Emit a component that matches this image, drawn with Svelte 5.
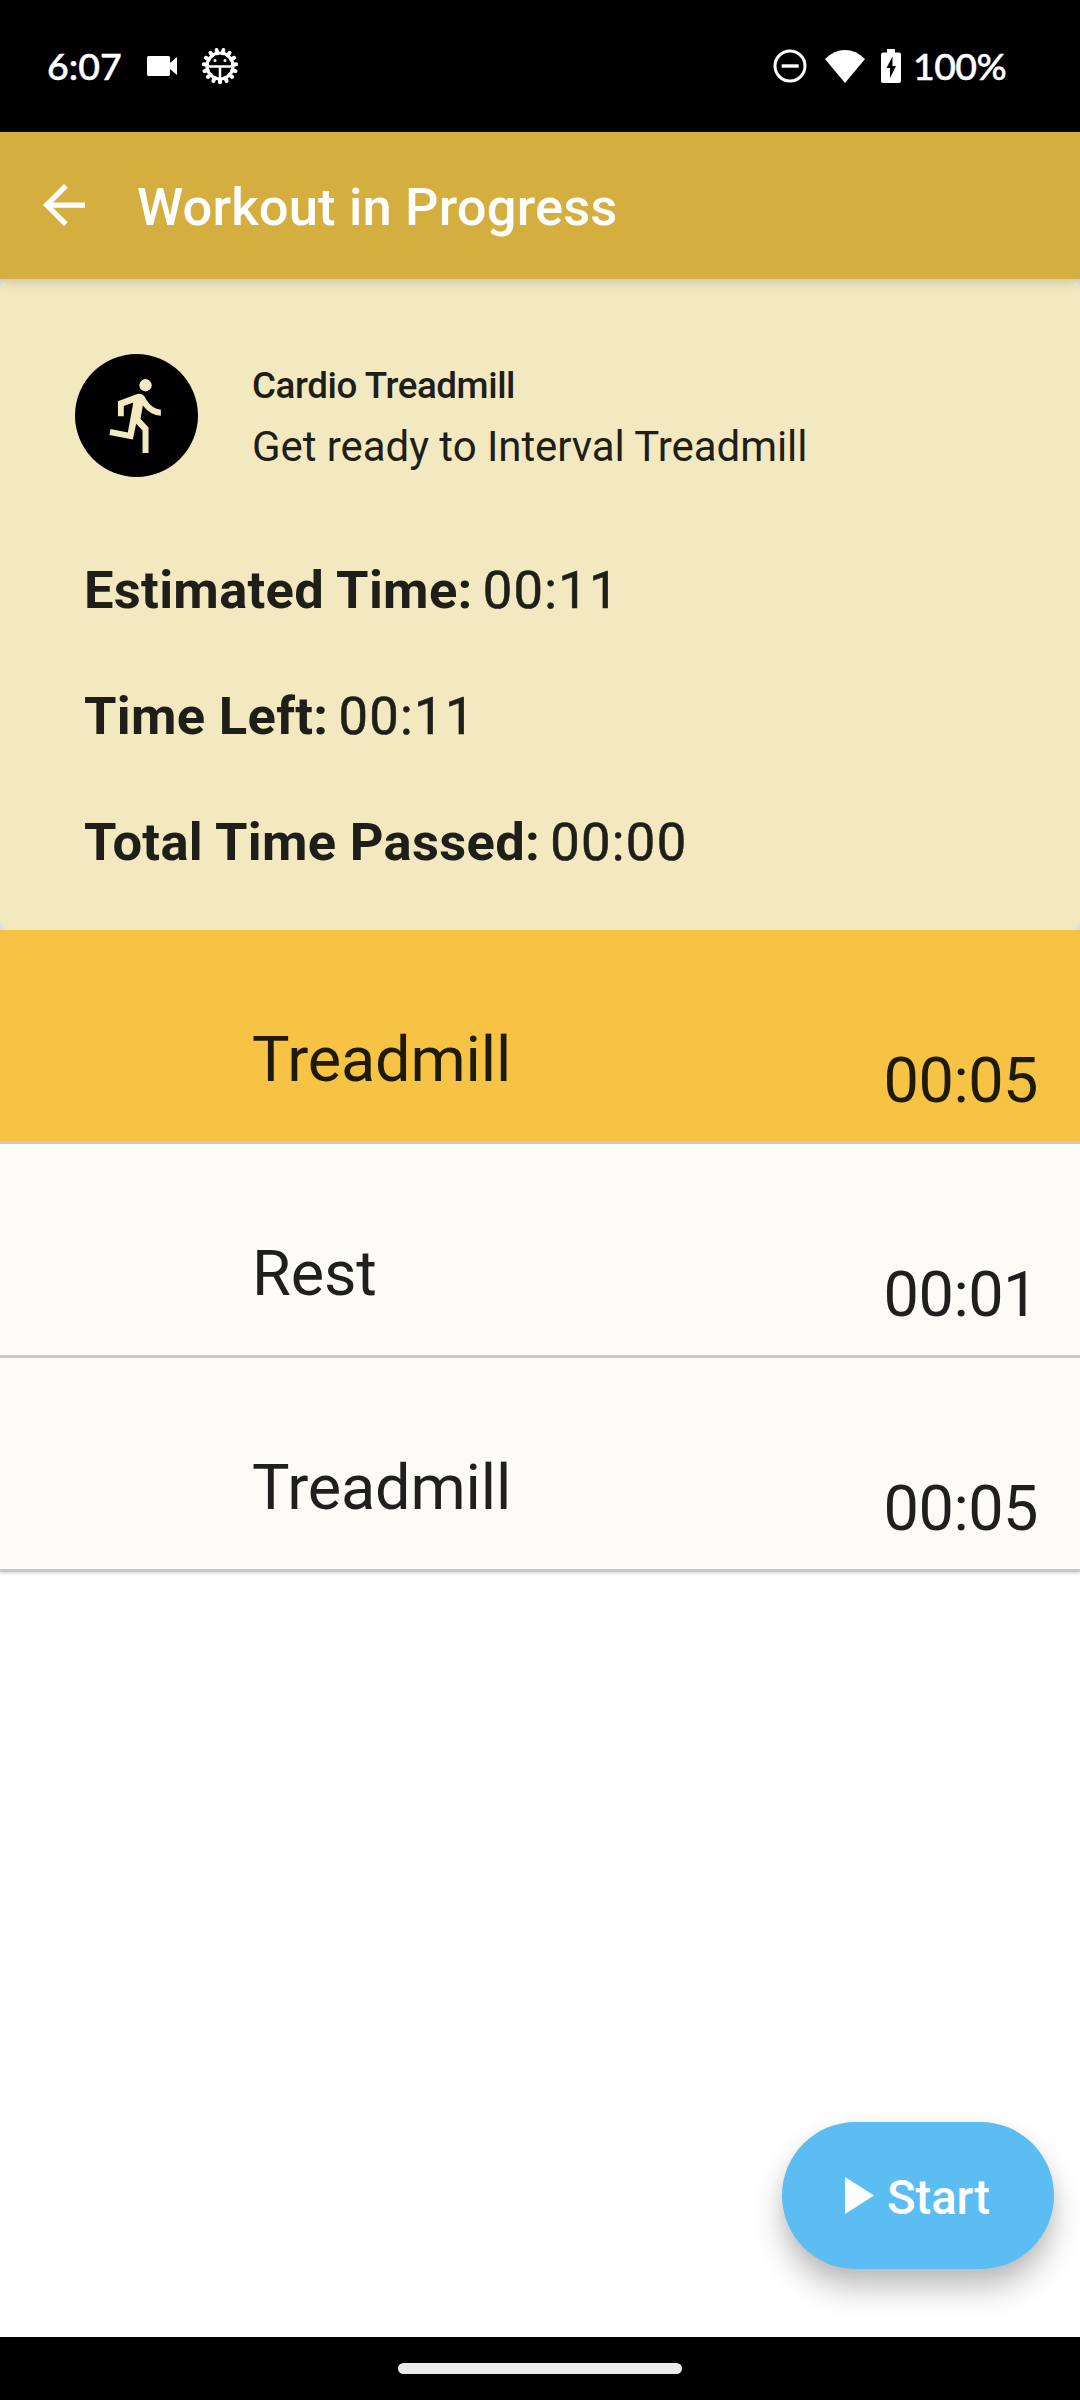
<script>
  const stats = [
    { label: 'Estimated Time:', value: '00:11' },
    { label: 'Time Left:', value: '00:11' },
    { label: 'Total Time Passed:', value: '00:00' }
  ];
  const steps = [
    { name: 'Treadmill', time: '00:05', active: true },
    { name: 'Rest', time: '00:01', active: false },
    { name: 'Treadmill', time: '00:05', active: false }
  ];
  const teeth = Array.from({ length: 15 }, (_, i) => i * 24 + 12);
</script>

<div class="screen">
  <div class="status">
    <span class="clock">6:07</span>
    <svg class="cam" width="30" height="20" viewBox="0 0 30 20"><path d="M1.500 0H21.500Q23 0 23 1.500V7L30 1V19L23 13V18.500Q23 20 21.500 20H1.500Q0 20 0 18.500V1.500Q0 0 1.500 0Z" fill="#fff" /></svg>
    <svg class="gear" width="38" height="38" viewBox="-19 -19 38 38">
      {#each teeth as a}
        <path d="M0 -13V-16.300" stroke="#fff" stroke-width="4" stroke-linecap="round" transform="rotate({a})" />
      {/each}
      <circle r="13" fill="none" stroke="#fff" stroke-width="3.200" />
      <path d="M-12 .4H12M0 0V12" stroke="#fff" stroke-width="2.500" />
      <circle cx="-5" cy="-5.500" r="1.500" fill="#fff" /><circle cx="5" cy="-5.500" r="1.500" fill="#fff" />
    </svg>
    <span class="grow"></span>
    <svg class="dnd" width="34" height="34" viewBox="0 0 34 34"><circle cx="17" cy="17" r="15" fill="none" stroke="#fff" stroke-width="3" /><path d="M8.700 17H25.700" stroke="#fff" stroke-width="3.400" /></svg>
    <svg class="wifi" width="40" height="33" viewBox="0 0 40 33"><path d="M0 9Q9 0 20 0T40 9L20 33Z" fill="#fff" /></svg>
    <svg class="batt" width="20" height="34" viewBox="0 0 20 34"><path fill-rule="evenodd" d="M6 0H14V3.500H18Q20 3.500 20 5.500V32Q20 34 18 34H2Q0 34 0 32V5.500Q0 3.500 2 3.500H6ZM11.500 7.500L5.500 19H9V29L15 17H11.500Z" fill="#fff" /></svg>
    <span class="pct">100%</span>
  </div>

  <header class="bar">
    <svg width="42" height="42" viewBox="4 4 16 16"><path d="M20 11H7.830l5.590-5.590L12 4l-8 8 8 8 1.410-1.410L7.830 13H20v-2z" fill="#fff" /></svg>
    <h1>Workout in Progress</h1>
  </header>

  <section class="cardwrap">
    <div class="card">
      <div class="intro">
        <svg width="123" height="123" viewBox="16 17 368 368">
          <circle cx="200" cy="201" r="184" fill="#000" />
          <circle cx="227" cy="110.500" r="18.500" fill="#f3e9c0" />
          <path fill="#f3e9c0" d="M144.500 203V158L198 138Q213 132 223 143L231 156Q246 180 273 184V202Q241 200 219 171L212 211L236 237V313H218V246L199 226L189 273L119 259.500L122.500 241.500L174 251.500L190.500 162L162 172.500V203Z" />
        </svg>
        <div class="titles">
          <div class="kind">Cardio Treadmill</div>
          <div class="ready">Get ready to Interval Treadmill</div>
        </div>
      </div>
      {#each stats as s}
        <div class="stat"><b>{s.label}</b><span>{s.value}</span></div>
      {/each}
    </div>
  </section>

  <main>
    {#each steps as s}
      <div class="row" class:active={s.active}>
        <span class="name">{s.name}</span>
        <span class="time">{s.time}</span>
      </div>
    {/each}
  </main>

  <div class="foot">
    <button>
      <svg width="29" height="37" viewBox="0 0 29 37"><path d="M0 0L29 18.500L0 37Z" fill="#fff" /></svg>
      <span>Start</span>
    </button>
  </div>
  <nav><i></i></nav>
</div>

<style>
  :global(body) { background: #fff; }
  .screen { width: 1080px; height: 2400px; display: flex; flex-direction: column; font-family: Roboto, sans-serif; color: #1f1f1f; background: #fff; overflow: hidden; }
  svg { display: block; flex: none; }
  .status { height: 132px; flex: none; box-sizing: border-box; background: #000; color: #fff; display: flex; align-items: center; padding: 0 75px 0 47px; font: 500 37.500px/44px Lato, sans-serif; -webkit-text-stroke: .5px #fff; }
  .grow { flex: 1; }
  .clock { width: 100px; }
  .cam { margin-right: 24px; }
  .dnd { margin-right: 18px; }
  .wifi { margin-right: 16px; }
  .batt { margin-right: 12px; }
  .pct { width: 92px; white-space: nowrap; letter-spacing: -.6px; }
  .bar { height: 147px; flex: none; background: #d4ae3f; display: flex; align-items: center; padding-left: 43px; box-shadow: 0 2px 12px rgba(0, 0, 0, .18); position: relative; z-index: 1; }
  .bar svg { margin-bottom: 1px; }
  h1 { margin: 3px 0 0 52px; font-weight: 500; font-size: 52.500px; line-height: 62px; letter-spacing: .16px; color: #fff; white-space: nowrap; }
  .cardwrap { height: 651px; flex: none; background: #dfe0e4; }
  .card { height: 651px; box-sizing: border-box; background: #f3e9c0; border-radius: 11px; padding: 75px 0 0 84px; color: #1f1e18; }
  .intro { display: flex; height: 173px; margin-left: -9px; }
  .titles { margin-left: 54px; padding-top: 6px; white-space: nowrap; }
  .kind { font-size: 36.750px; font-weight: 500; line-height: 52px; letter-spacing: -.42px; }
  .ready { font-size: 42px; line-height: 60px; margin-top: 5px; letter-spacing: -.06px; }
  .stat { height: 126px; display: flex; gap: 10px; align-items: center; font-size: 52.500px; line-height: 126px; white-space: nowrap; }
  .stat b { font-weight: 700; letter-spacing: .3px; }
  .stat span { letter-spacing: 1.310px; -webkit-text-stroke: .6px #1f1e18; }
  main { flex: none; }
  .row { height: 211px; margin-bottom: 3px; background: #fcfbf7; box-shadow: 0 3px 0 #c9c9c8, 0 4px 3px rgba(0, 0, 0, .2); display: flex; justify-content: space-between; box-sizing: border-box; padding: 93px 42px 0 252px; font-size: 63px; line-height: 74px; }
  .row.active { background: #f6c344; color: #1f1a04; }
  .name { letter-spacing: -.15px; }
  .time { padding-top: 21px; letter-spacing: -.5px; }
  .foot { flex: 1; display: flex; align-items: flex-end; justify-content: flex-end; padding: 0 26px 68px 0; }
  button { width: 272px; height: 147px; border: 0; border-radius: 74px; background: #5cbdf2; display: flex; align-items: center; padding: 0 0 0 63px; gap: 13px; color: #fff; font: 500 47.250px/56px Roboto, sans-serif; box-shadow: 0 20px 30px rgba(0, 0, 0, .24), 0 4px 16px rgba(0, 0, 0, .06); }
  button span { padding-top: 5px; letter-spacing: -.1px; }
  nav { height: 63px; flex: none; background: #000; display: flex; align-items: center; justify-content: center; }
  nav i { width: 284px; height: 11px; border-radius: 5.500px; background: #ebebeb; }
</style>
